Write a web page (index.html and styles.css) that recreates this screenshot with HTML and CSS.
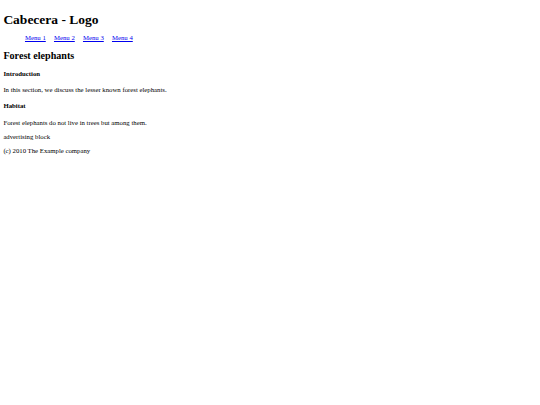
FILE: index.html
```html
<!DOCTYPE html>
<html lang="es">
<head>
<meta charset="utf-8">
<title>Forest elephants</title>
<link rel="stylesheet" href="styles.css">
</head>
<body class="page">
<header class="site-header">
  <h1 class="logo">Cabecera - Logo</h1>
  <nav class="menu">
    <ul class="menu-list">
      <li class="menu-item"><a class="menu-link" href="#">Menu 1</a></li>
      <li class="menu-item"><a class="menu-link" href="#">Menu 2</a></li>
      <li class="menu-item"><a class="menu-link" href="#">Menu 3</a></li>
      <li class="menu-item"><a class="menu-link" href="#">Menu 4</a></li>
    </ul>
  </nav>
</header>
<main class="content">
  <article class="article">
    <h2 class="article-title">Forest elephants</h2>
    <section class="article-section">
      <h4 class="section-title">Introduction</h4>
      <p class="text">In this section, we discuss the lesser known forest elephants.</p>
    </section>
    <section class="article-section">
      <h4 class="section-title">Habitat</h4>
      <p class="text">Forest elephants do not live in trees but among them.</p>
    </section>
  </article>
</main>
<aside class="ads"><p class="text">advertising block</p></aside>
<footer class="site-footer"><p class="text">(c) 2010 The Example company</p></footer>
</body>
</html>
```

FILE: styles.css
```css
html {
  background: #ffffff;
}

.page {
  margin: 3.375px;
  font-family: "Liberation Serif", "Times New Roman", serif;
  font-size: 6.75px;
  color: #000000;
}

.logo {
  font-size: 2em;
  font-weight: bold;
  margin: 0.67em 0 0.45em;
}

.menu-list {
  display: flex;
  gap: 8.2px;
  list-style: none;
  margin: 0 0 1em;
  padding: 0 0 0 21.6px;
}

.menu-link {
  color: #0000ee;
  text-decoration: underline;
}

.article-title {
  font-size: 1.5em;
  font-weight: bold;
  margin: 0.83em 0 0.75em;
}

.section-title {
  font-size: 1em;
  font-weight: bold;
  margin: 1.36em 0;
}

.text {
  margin: 1.04em 0;
}
```
